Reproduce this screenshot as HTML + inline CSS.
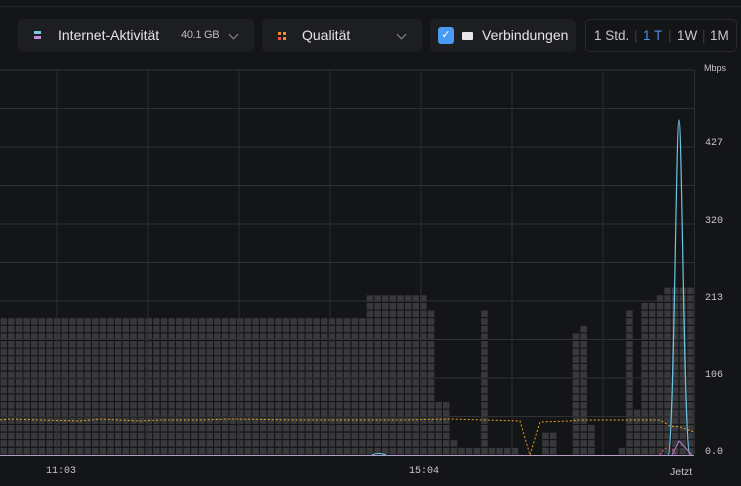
<!DOCTYPE html>
<html><head><meta charset="utf-8"><style>
html,body{margin:0;padding:0;background:#141517;width:741px;height:486px;overflow:hidden;font-family:"Liberation Sans",sans-serif;color:#e6e6e8}
.top{position:absolute;left:0;top:6px;width:741px;height:1px;background:#25262a}
.pnl{position:absolute;top:19px;height:33px;background:#1d1e21;border-radius:5px;font-size:14px;line-height:33px}
.chev{position:absolute;top:12px;width:6px;height:6px;border-right:1.5px solid #8a8b90;border-bottom:1.5px solid #8a8b90;transform:rotate(45deg)}
.ax{position:absolute;font-family:"Liberation Mono",monospace;font-size:10px;color:#c8c8cc}
</style></head><body>
<div class="top"></div>
<div class="pnl" style="left:18px;width:236px">
 <div style="position:absolute;left:16px;top:12px;width:7px;height:3px;background:#7fc9e8"></div>
 <div style="position:absolute;left:16px;top:17px;width:7px;height:3px;background:#c08fe0"></div>
 <span style="position:absolute;left:40px">Internet-Aktivität</span>
 <span style="position:absolute;left:163px;font-size:11px;color:#bbb;letter-spacing:-0.3px">40.1 GB</span>
 <div class="chev" style="left:212px"></div>
</div>
<div class="pnl" style="left:262px;width:160px">
 <div style="position:absolute;left:16px;top:13px;width:3px;height:3px;background:#f08a2a;box-shadow:5px 0 #f08a2a,0 5px #e8584a,5px 5px #f08a2a"></div>
 <span style="position:absolute;left:40px">Qualität</span>
 <div class="chev" style="left:136px"></div>
</div>
<div class="pnl" style="left:430px;width:146px">
 <div style="position:absolute;left:8px;top:8px;width:16px;height:17px;background:#4a9af5;border-radius:3px;color:#fff;font-size:11px;line-height:17px;text-align:center">✓</div>
 <div style="position:absolute;left:32px;top:13px;width:11px;height:8px;background:#e8e8ea;border-radius:1px"></div>
 <span style="position:absolute;left:52px">Verbindungen</span>
</div>
<div class="pnl" style="left:585px;width:150px;background:transparent;border:1px solid #2a2b2f;top:19px;height:31px;line-height:31px;color:#c8c8cc;font-size:13.5px">
 <span style="position:absolute;left:8px">1 Std.</span>
 <span style="position:absolute;left:48px;color:#3a3b3f">|</span>
 <span style="position:absolute;left:57px;color:#4a8fe0">1 T</span>
 <span style="position:absolute;left:82px;color:#3a3b3f">|</span>
 <span style="position:absolute;left:91px">1W</span>
 <span style="position:absolute;left:116px;color:#3a3b3f">|</span>
 <span style="position:absolute;left:124px">1M</span>
</div>
<svg id="c" width="741" height="486" style="position:absolute;left:0;top:0"></svg>
<div class="ax" style="left:704px;top:63px;font-family:'Liberation Sans';font-size:9px">Mbps</div>
<div class="ax" style="left:705px;top:138px">427</div>
<div class="ax" style="left:705px;top:216px">320</div>
<div class="ax" style="left:705px;top:293px">213</div>
<div class="ax" style="left:705px;top:370px">106</div>
<div class="ax" style="left:705px;top:447px">0.0</div>
<div class="ax" style="left:46px;top:466px">11:03</div>
<div class="ax" style="left:409px;top:466px">15:04</div>
<div class="ax" style="left:670px;top:466px;font-family:'Liberation Sans';font-size:10.5px">Jetzt</div>
<script>
var s='',B=455,P=7.63;
var segs=[[0,365,318],[365,428,295],[428,436,310],[436,450,402],[450,458,441],[458,481,448],[481,489,310],[489,520,448],[542,556,433],[572,580,333],[580,588,326],[588,594,419],[617,625,449],[625,632,310],[632,640,410],[640,656,302],[656,664,295],[664,694,287]];
for(var x=0;x<694;x+=P){var cx=x+P/2,t=null;for(var i=0;i<segs.length;i++){if(cx>=segs[i][0]&&cx<segs[i][1])t=segs[i][2];}
 if(t===null)continue;for(var y=B;y-P>=t-2;y-=P){s+='<rect x="'+(x+0.5).toFixed(1)+'" y="'+(y-P+0.5).toFixed(1)+'" width="'+(P-1.1).toFixed(1)+'" height="'+(P-1.1).toFixed(1)+'" fill="#39393c"/>';}}
for(var y=70;y<455;y+=38.5)s+='<line x1="0" x2="694" y1="'+y+'" y2="'+y+'" stroke="#303135" stroke-width="1"/>';
[57,148,239,330,421,512,603].forEach(function(x){s+='<line x1="'+x+'" x2="'+x+'" y1="70" y2="455" stroke="#2c2d31"/>'});
s+='<line x1="694.5" x2="694.5" y1="70" y2="455" stroke="#2c2d31"/>';
s+='<line x1="0" x2="694" y1="455.5" y2="455.5" stroke="#b7a0c8" stroke-width="1"/>';
s+='<polyline fill="none" stroke="#e8a020" stroke-width="1" stroke-dasharray="2,2" points="0,420 10,419 40,420 80,421 100,419 140,421 160,420 200,420 230,419 300,420 400,420 450,419 520,421 530,455 540,422 570,421 580,420 600,420 640,420 660,420 670,426 680,427 694,432"/>';
s+='<path d="M668,455 C674,455 676,120 679,120 C682,120 684,455 690,455" fill="none" stroke="#6cc5e8" stroke-width="1.2"/>';
s+='<path d="M672,455 L679,441 L692,455" fill="none" stroke="#b080d0" stroke-width="1"/>';
s+='<path d="M372,455 Q378,452 386,455" fill="none" stroke="#6cc5e8" stroke-width="1"/>';
s+='<path d="M660,455 Q668,440 676,455" fill="none" stroke="#e06070" stroke-width="1" stroke-dasharray="2,2"/>';
document.getElementById('c').innerHTML=s;
</script>
</body></html>
